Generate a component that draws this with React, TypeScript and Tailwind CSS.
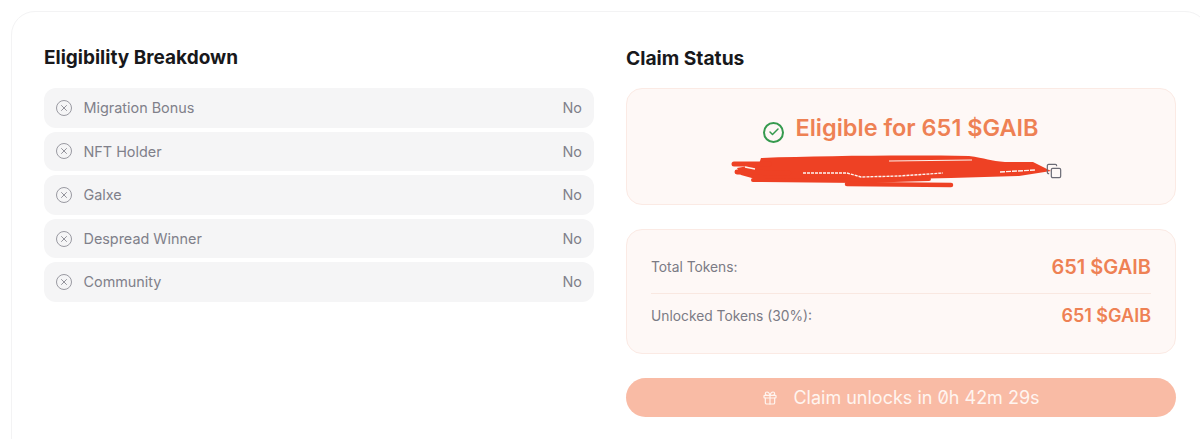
import { Check, Copy, Gift, X } from "lucide-react";

const items = ["Migration Bonus", "NFT Holder", "Galxe", "Despread Winner", "Community"];

// red marker scribble over the wallet address
const Scribble = () => (
  <svg className="absolute left-[102px] top-[60px]" width="330" height="40" viewBox="0 0 330 40" fill="none">
    <path d="M32 9 C90 7 170 6 240 7 C256 9 262 12 276 13 L304 13 L322 22 L290 27 L222 29 L130 31 L30 31 L12 26 L8 19 L30 15 Z" fill="#ee4124" />
    <g stroke="#ee4124" strokeLinecap="round" strokeLinejoin="round">
      <path d="M5 15 L40 15" strokeWidth="5" />
      <path d="M8 23 L60 24" strokeWidth="5" />
      <path d="M24 31 L130 32 L200 30" strokeWidth="4" />
      <path d="M118 35 L222 36" strokeWidth="4.5" />
    </g>
    <path d="M160 12 L243 11" stroke="#fdf0ea" strokeWidth="1.2" />
    <path d="M74 24 L118 24 L132 28 L170 27 L214 24" stroke="#fdf3ef" strokeWidth="1.4" strokeDasharray="3 1" />
    <path d="M271 23 L306 21" stroke="#fdf3ef" strokeWidth="1.4" strokeDasharray="5 1" />
    <path d="M16 18 L26 20" stroke="#fdf3ef" strokeWidth="1.4" />
  </svg>
);

export default function App() {
  return (
    <div className="h-[439px] w-[1200px] overflow-hidden bg-white pl-[11px] pt-[11px] font-['Inter',sans-serif]">
      <div className="grid h-[460px] w-[1198px] grid-cols-2 gap-8 rounded-3xl border border-[#f3f3f4] p-8">
        <div>
          <h2 className="mb-[18px] mt-[2px] text-[19px] leading-6 font-bold text-[#18181b]">Eligibility Breakdown</h2>
          <div className="flex flex-col gap-1">
            {items.map((item) => (
              <div key={item} className="flex h-[39.6px] items-center justify-between rounded-xl bg-[#f5f5f6] px-3 text-[14.4px] text-[#80808a]">
                <div className="flex items-center gap-[11.5px]">
                  <span className="flex h-4 w-4 items-center justify-center rounded-full border-[1.5px] border-[#9a9aa2] text-[#8a8a93]">
                    <X className="h-2.5 w-2.5" strokeWidth={2.2} />
                  </span>
                  <span>{item}</span>
                </div>
                <span>No</span>
              </div>
            ))}
          </div>
        </div>
        <div>
          <h2 className="mb-[18px] mt-[2px] text-[19.2px] leading-6 font-bold text-[#18181b]">Claim Status</h2>
          <div className="relative flex h-[117px] flex-col items-center rounded-2xl border border-[#fbeae4] bg-[#fef8f6] pt-[23px]">
            <div className="flex items-center gap-[11px]">
              <span className="mt-2 flex h-[21px] w-[21px] items-center justify-center rounded-full border-2 border-[#359a4e] text-[#359a4e]">
                <Check className="h-3 w-3" strokeWidth={3} />
              </span>
              <span className="text-[23.5px] leading-8 font-semibold text-[#ee8154]">Eligible for 651 $GAIB</span>
            </div>
            <Scribble />
            <Copy className="absolute left-[419px] top-[74px] h-4 w-4 text-[#6b6b75]" strokeWidth={1.8} />
          </div>
          <div className="mt-6 rounded-2xl border border-[#fbeae4] bg-[#fef8f6] px-6 pb-[21px] pt-[21px]">
            <div className="flex items-center justify-between border-b border-[#f9e8e1] pb-[10px]">
              <span className="text-[13.8px] leading-8 text-[#7b7b85]">Total Tokens:</span>
              <span className="text-xl leading-8 font-semibold text-[#ee8154]">651 $GAIB</span>
            </div>
            <div className="flex items-center justify-between pt-[6px]">
              <span className="text-[13.8px] leading-8 text-[#7b7b85]">Unlocked Tokens (30%):</span>
              <span className="text-lg leading-8 font-semibold text-[#ee8154]">651 $GAIB</span>
            </div>
          </div>
          <button className="mt-6 flex h-[39px] w-full items-center justify-center gap-[15px] rounded-full bg-[#f9bba5] text-lg text-[#fff5f0] slashed-zero">
            <Gift className="h-4 w-4" strokeWidth={1.8} />
            <span>Claim unlocks in 0h 42m 29s</span>
          </button>
        </div>
      </div>
    </div>
  );
}
